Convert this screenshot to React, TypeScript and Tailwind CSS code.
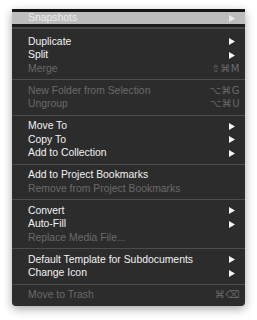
type Item = { label: string; arrow?: boolean; shortcut?: string; disabled?: boolean }

const groups: Item[][] = [
  [
    { label: 'Duplicate', arrow: true },
    { label: 'Split', arrow: true },
    { label: 'Merge', shortcut: '⇧⌘M', disabled: true },
  ],
  [
    { label: 'New Folder from Selection', shortcut: '⌥⌘G', disabled: true },
    { label: 'Ungroup', shortcut: '⌥⌘U', disabled: true },
  ],
  [
    { label: 'Move To', arrow: true },
    { label: 'Copy To', arrow: true },
    { label: 'Add to Collection', arrow: true },
  ],
  [
    { label: 'Add to Project Bookmarks' },
    { label: 'Remove from Project Bookmarks', disabled: true },
  ],
  [
    { label: 'Convert', arrow: true },
    { label: 'Auto-Fill', arrow: true },
    { label: 'Replace Media File...', disabled: true },
  ],
  [
    { label: 'Default Template for Subdocuments', arrow: true },
    { label: 'Change Icon', arrow: true },
  ],
  [{ label: 'Move to Trash', shortcut: '⌘⌫', disabled: true }],
]

function Arrow({ color = '#f4f4f4' }: { color?: string }) {
  return (
    <svg width="6" height="7" viewBox="0 0 6 7" className="mr-[5px]">
      <path d="M0 0 L6 3.5 L0 7 Z" fill={color} />
    </svg>
  )
}

function Row({ item }: { item: Item }) {
  return (
    <div
      className={`flex h-[13.5px] items-center justify-between pl-4 pr-[5px] text-[10.4px] leading-none ${
        item.disabled ? 'text-[#6a6a6a]' : 'text-[#f2f2f2]'
      }`}
    >
      <span>{item.label}</span>
      {item.arrow && <Arrow />}
      {item.shortcut && (
        <span className="font-['DejaVu_Sans',sans-serif] text-[10px] tracking-[0.5px]">{item.shortcut}</span>
      )}
    </div>
  )
}

export default function App() {
  return (
    <div className="h-[320px] w-[257px] bg-white pt-[9px] pl-3">
      <div className="w-[233px] overflow-hidden rounded-b-[4px] bg-[#2c2c2c] pb-[4px] font-['Liberation_Sans',sans-serif] shadow-[0_3px_10px_rgba(0,0,0,0.35)]">
        {/* highlighted header row */}
        <div className="h-[3px] bg-[#161616]" />
        <div className="flex h-[12px] items-center justify-between bg-[#bdbdbd] pl-4 pr-[5px] text-[10.4px] leading-none text-[#ececec]">
          <span>Snapshots</span>
          <Arrow color="#ececec" />
        </div>
        <div className="h-[3px] bg-[#1c1c1c]" />
        <div className="h-[2px] bg-[#474747]" />
        <div className="h-[6px]" />

        {groups.map((g, i) => (
          <div key={i}>
            {i > 0 && (
              <div className="flex h-[8.5px] items-center">
                <div className="h-px w-full bg-[#4c4c4c]" />
              </div>
            )}
            {g.map(item => (
              <Row key={item.label} item={item} />
            ))}
          </div>
        ))}
      </div>
    </div>
  )
}
